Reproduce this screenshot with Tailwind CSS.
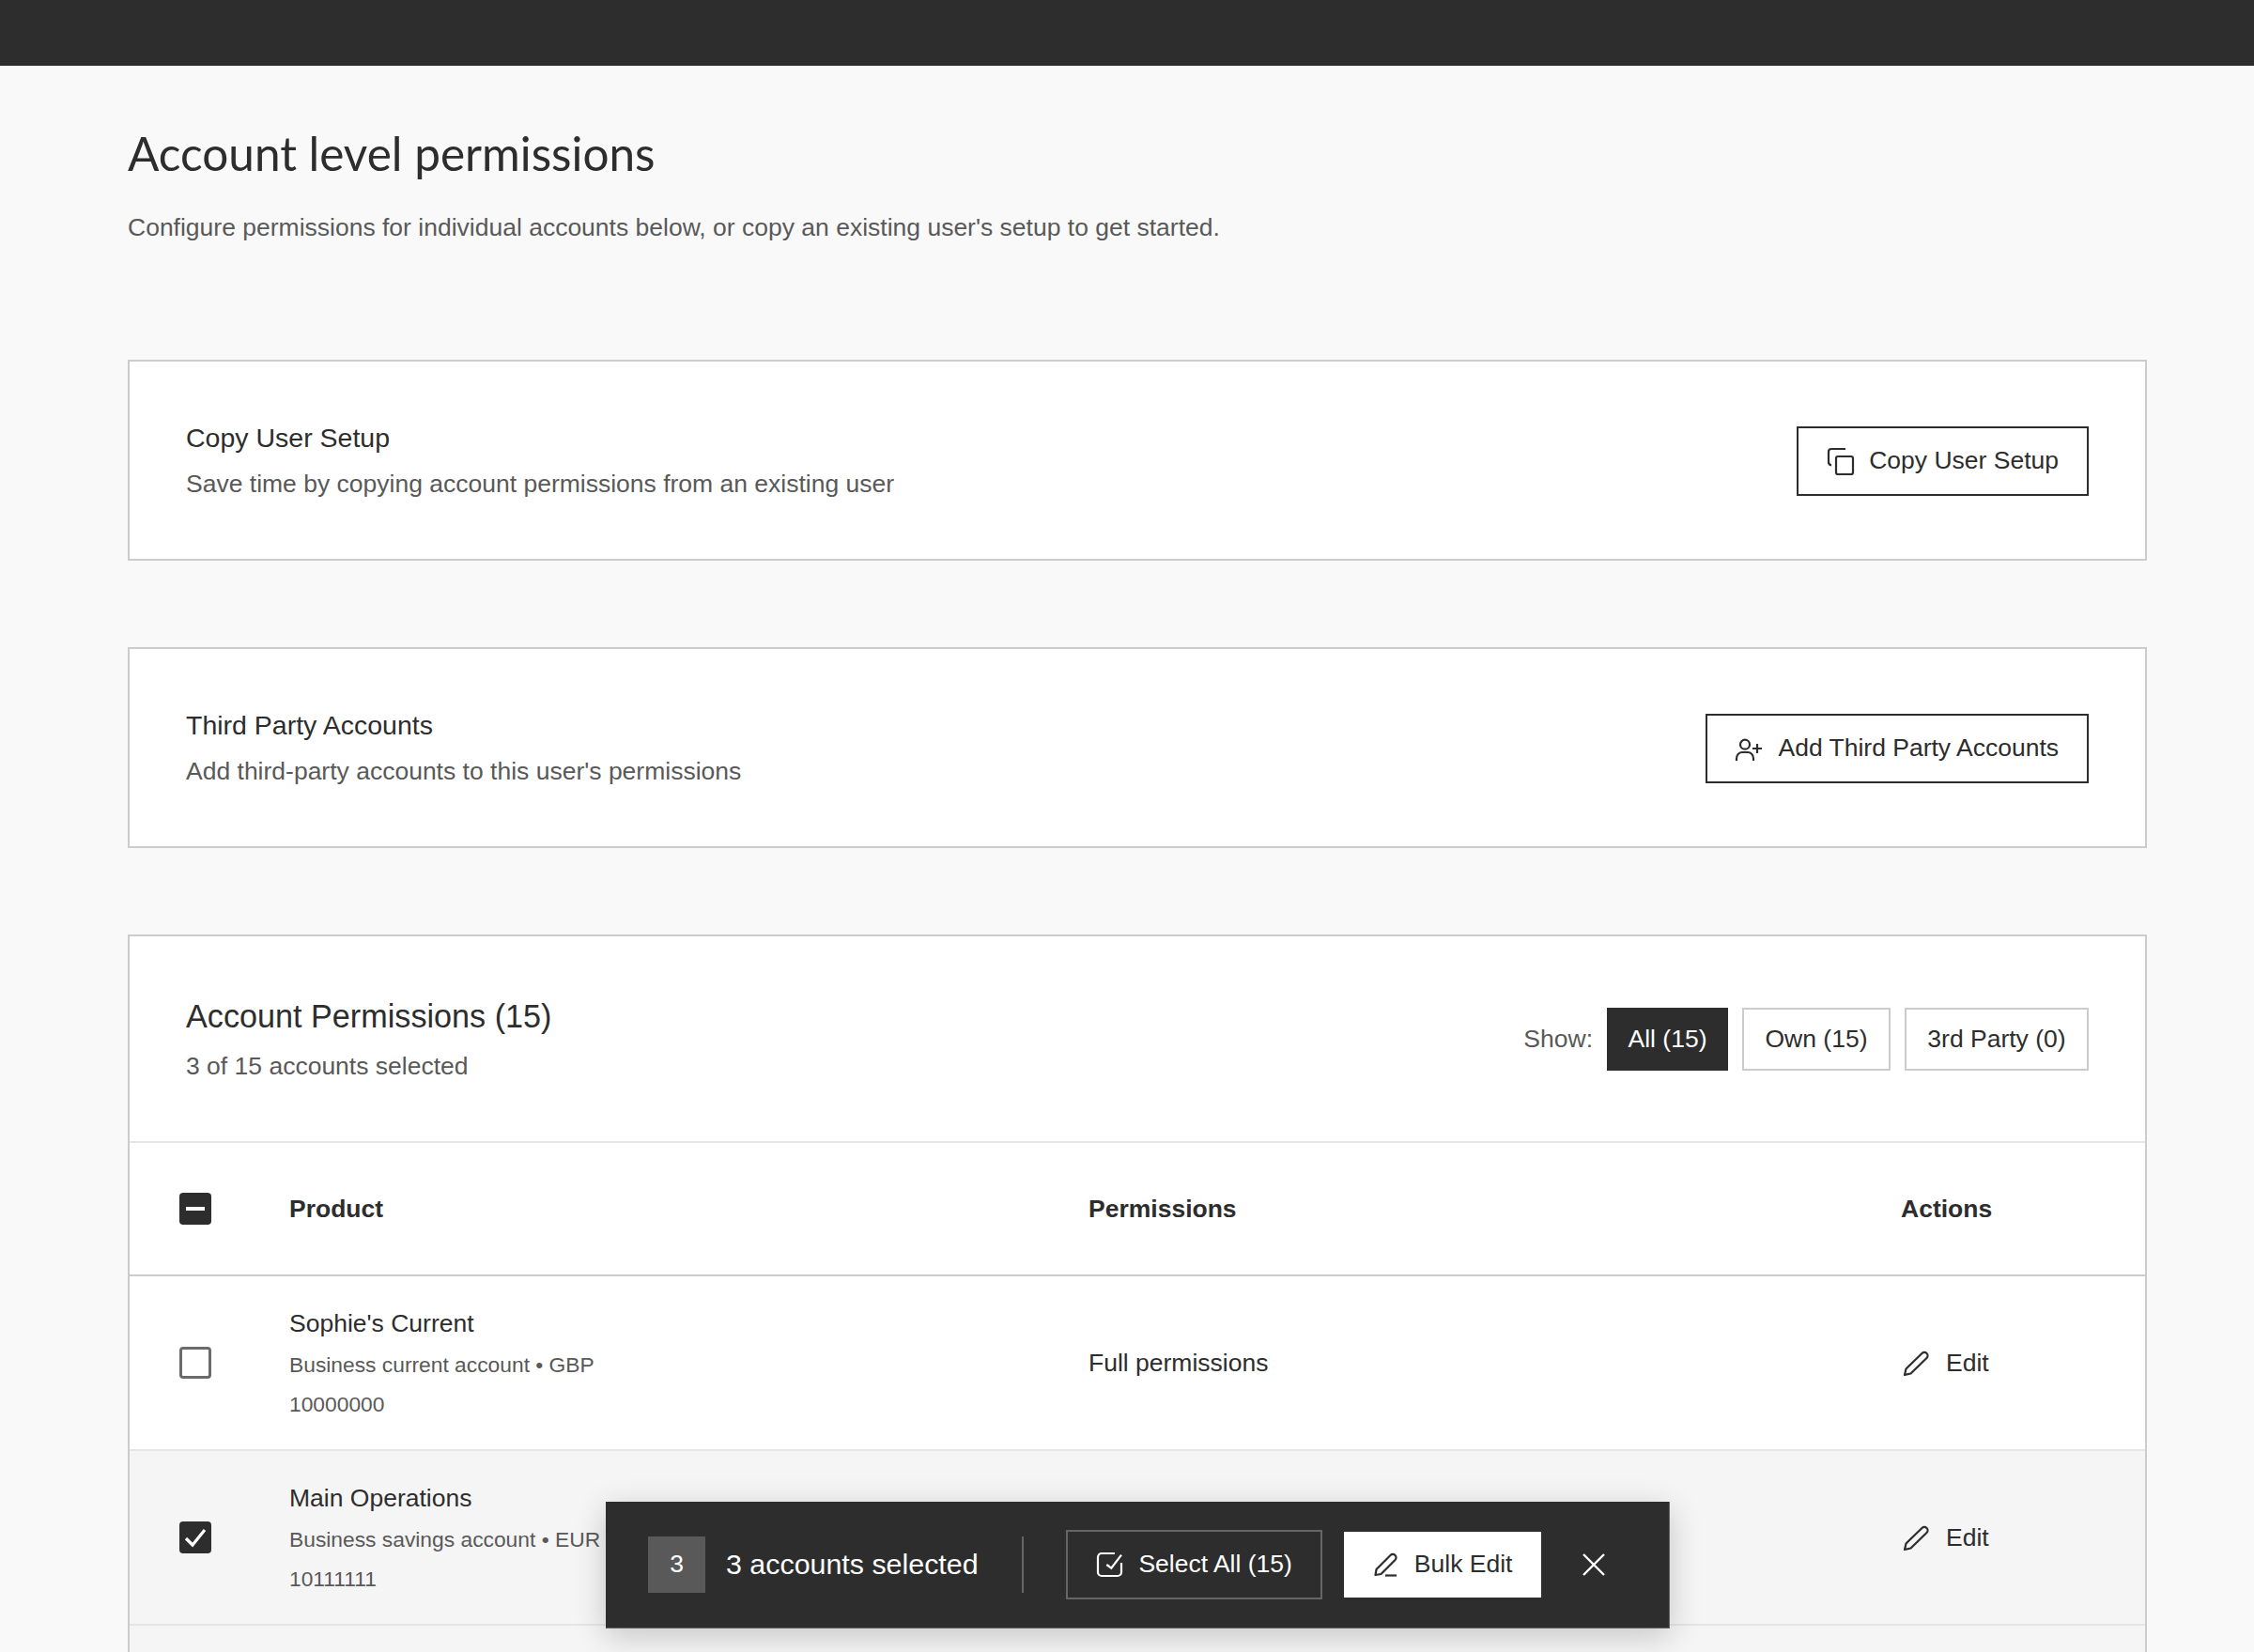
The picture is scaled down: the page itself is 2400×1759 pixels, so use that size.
<!DOCTYPE html>
<html lang="en">
<head>
    <meta charset="UTF-8">
    <title>Account level permissions</title>
    <script src="https://cdn.jsdelivr.net/npm/@tailwindcss/browser@4"></script>
</head>
<body class="bg-[#f9f9f9] font-['Liberation_Sans',Arial,sans-serif] text-[#2d2d2d]">
    <div class="relative h-[1759px] overflow-hidden">
        <!-- top bar -->
        <div class="h-[70px] bg-[#2d2d2d]"></div>

        <main class="pl-[136px] pr-[114px]">
            <h1 class="mt-[66px] font-['Lato',sans-serif] text-[49.5px] leading-[54px] font-normal">Account level permissions</h1>
            <p class="mt-[33px] text-[26.5px] leading-[38px] text-[#595959]">Configure permissions for individual accounts below, or copy an existing user's setup to get started.</p>

            <!-- copy user setup -->
            <section class="mt-[122px] h-[214px] bg-white border-2 border-[#cccccc] pl-[60px] pr-[60px] flex items-center justify-between">
                <div>
                    <h2 class="text-[28.5px] leading-[38px]">Copy User Setup</h2>
                    <p class="mt-[11px] text-[26.5px] leading-[38px] text-[#595959]">Save time by copying account permissions from an existing user</p>
                </div>
                <button class="mt-[2px] h-[74px] border-2 border-[#2d2d2d] pl-[28px] pr-[30px] flex items-center gap-[15px] text-[26.5px]">
                    <svg class="w-8 h-8" viewBox="0 0 32 32" fill="none" stroke="currentColor" stroke-width="2.2"><rect x="12" y="11" width="18" height="19" rx="2"/><path d="M7 20.5C5 20 4 19 4 17V6C4 4 5 3 7 3H22"/></svg>
                    Copy User Setup
                </button>
            </section>

            <!-- third party accounts -->
            <section class="mt-[92px] h-[214px] bg-white border-2 border-[#cccccc] pl-[60px] pr-[60px] flex items-center justify-between">
                <div>
                    <h2 class="text-[28.5px] leading-[38px]">Third Party Accounts</h2>
                    <p class="mt-[11px] text-[26.5px] leading-[38px] text-[#595959]">Add third-party accounts to this user's permissions</p>
                </div>
                <button class="mt-[2px] h-[74px] border-2 border-[#2d2d2d] pl-[28px] pr-[30px] flex items-center gap-[15px] text-[26.5px]">
                    <svg class="w-8 h-8" viewBox="0 0 32 32" fill="none" stroke="currentColor" stroke-width="2.2"><circle cx="12" cy="11.7" r="5"/><path d="M3 29V26.5C3 22.5 6 20 9 20H15C18 20 21 22.5 21 26.5V29"/><path d="M20 16H30M25 11V21"/></svg>
                    Add Third Party Accounts
                </button>
            </section>

            <!-- account permissions -->
            <section class="mt-[92px] bg-white border-2 border-[#cccccc]">
                <div class="h-[220px] pl-[60px] pr-[60px] flex items-start justify-between border-b-2 border-[#e5e5e5]">
                    <div>
                        <h2 class="mt-[64px] text-[34.2px] leading-[42px]">Account Permissions (15)</h2>
                        <p class="mt-[13px] text-[26.5px] leading-[38px] text-[#595959]">3 of 15 accounts selected</p>
                    </div>
                    <div class="mt-[76px] flex items-center gap-[15px] text-[26.5px]">
                        <span class="text-[#595959]">Show:</span>
                        <button class="h-[67px] w-[129px] bg-[#2d2d2d] text-white">All (15)</button>
                        <button class="h-[67px] w-[158px] border-2 border-[#cccccc]">Own (15)</button>
                        <button class="h-[67px] w-[196px] border-2 border-[#cccccc]">3rd Party (0)</button>
                    </div>
                </div>

                <div class="h-[142px] grid grid-cols-[170px_851px_865px_1fr] items-center border-b-2 border-[#cccccc] text-[26.5px] font-bold">
                    <div class="pl-[53px]">
                        <span class="w-[34px] h-[34px] rounded-[4px] bg-[#2d2d2d] flex items-center justify-center"><span class="w-5 h-1 bg-white"></span></span>
                    </div>
                    <div class="pt-[1px]">Product</div>
                    <div class="pt-[1px]">Permissions</div>
                    <div class="pt-[1px]">Actions</div>
                </div>

                <div class="h-[186px] grid grid-cols-[170px_851px_865px_1fr] items-center border-b-2 border-[#e5e5e5]">
                    <div class="pl-[53px]">
                        <span class="block w-[34px] h-[34px] rounded-[4px] border-[3px] border-[#6b6b6b] bg-white"></span>
                    </div>
                    <div class="pt-[2px]">
                        <div class="text-[26.5px] leading-[42px]">Sophie's Current</div>
                        <div class="mt-[2px] text-[22.8px] leading-[42px] text-[#595959]">Business current account • GBP</div>
                        <div class="text-[22.8px] leading-[42px] text-[#595959]">10000000</div>
                    </div>
                    <div class="pt-[2px] text-[26.5px]">Full permissions</div>
                    <div class="pt-[2px] flex items-center gap-4 text-[26.5px]">
                        <svg class="w-8 h-8" viewBox="0 0 32 32" fill="none" stroke="currentColor" stroke-width="2.2" stroke-linejoin="round"><path d="M4 28L5.5 21.5L22.5 5A3.5 3.5 0 0 1 27.5 10L10.5 26.5Z"/></svg>
                        Edit
                    </div>
                </div>

                <div class="h-[186px] grid grid-cols-[170px_851px_865px_1fr] items-center border-b-2 border-[#e5e5e5] bg-[#f5f5f5]">
                    <div class="pl-[53px]">
                        <span class="w-[34px] h-[34px] rounded-[4px] bg-[#2d2d2d] flex items-center justify-center">
                            <svg class="w-7 h-7" viewBox="0 0 28 28" fill="none" stroke="white" stroke-width="3.2"><path d="M4 15L11 22L24 6"/></svg>
                        </span>
                    </div>
                    <div class="pt-[2px]">
                        <div class="text-[26.5px] leading-[42px]">Main Operations</div>
                        <div class="mt-[2px] text-[22.8px] leading-[42px] text-[#595959]">Business savings account • EUR</div>
                        <div class="text-[22.8px] leading-[42px] text-[#595959]">10111111</div>
                    </div>
                    <div></div>
                    <div class="pt-[2px] flex items-center gap-4 text-[26.5px]">
                        <svg class="w-8 h-8" viewBox="0 0 32 32" fill="none" stroke="currentColor" stroke-width="2.2" stroke-linejoin="round"><path d="M4 28L5.5 21.5L22.5 5A3.5 3.5 0 0 1 27.5 10L10.5 26.5Z"/></svg>
                        Edit
                    </div>
                </div>

                <div class="h-[186px] bg-[#f5f5f5]"></div>
            </section>
        </main>

        <!-- floating bulk action bar -->
        <div class="absolute left-[645px] top-[1599px] w-[1133px] h-[135px] bg-[#2d2d2d] border-r border-b border-[#666666] shadow-[0_8px_32px_rgba(0,0,0,0.2)] pl-[45px] flex items-center text-white">
            <span class="w-[61px] h-[60px] bg-[#595959] flex items-center justify-center text-[26.5px]">3</span>
            <span class="ml-[22px] text-[30.4px]">3 accounts selected</span>
            <span class="ml-[46px] w-[2px] h-[60px] bg-[#666666]"></span>
            <button class="ml-[45px] h-[74px] w-[273px] border-2 border-[#666666] flex items-center justify-center gap-[14px] text-[26.5px]">
                <svg class="w-8 h-8" viewBox="0 0 32 32" fill="none" stroke="currentColor" stroke-width="2.2"><path d="M21 4H7A4 4 0 0 0 3 8V24A4 4 0 0 0 7 28H24A4 4 0 0 0 28 24V14"/><path d="M12.3 16L17.3 19.7L28 5.7"/></svg>
                Select All (15)
            </button>
            <button class="ml-[23px] h-[70px] w-[210px] bg-white text-[#2d2d2d] flex items-center justify-center gap-[13px] text-[26.5px]">
                <svg class="w-8 h-8" viewBox="0 0 32 32" fill="none" stroke="currentColor" stroke-width="2.2" stroke-linejoin="round"><path d="M3.5 27L4.5 21L19.5 6A3.4 3.4 0 0 1 24.5 11L9.5 26Z"/><path d="M14 27.5H26"/></svg>
                Bulk Edit
            </button>
            <button class="ml-[44px] w-[24px] h-[24px]">
                <svg class="w-6 h-6" viewBox="0 0 24 24" fill="none" stroke="currentColor" stroke-width="2.4"><path d="M1 1L23 23M23 1L1 23"/></svg>
            </button>
        </div>
    </div>
</body>
</html>
